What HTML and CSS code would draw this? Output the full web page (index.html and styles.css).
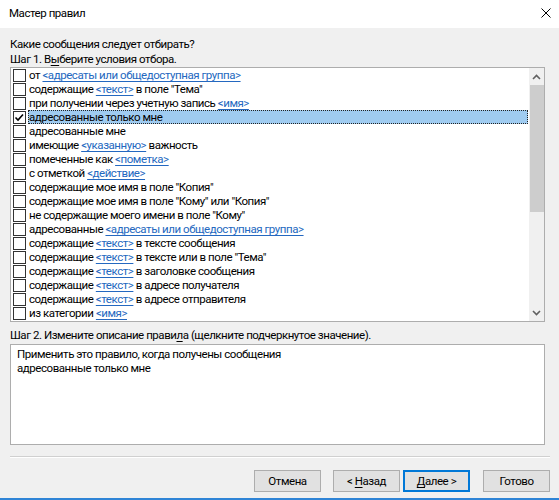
FILE: index.html
```html
<!DOCTYPE html>
<html lang="ru">
<head>
<meta charset="utf-8">
<title>Мастер правил</title>
<link rel="stylesheet" href="styles.css">
</head>
<body>
<div class="window">
  <div class="titlebar">
    <span class="title">Мастер правил</span>
    <svg class="close" width="10" height="10" viewBox="0 0 10 10"><path d="M0.5 0.5 L9.5 9.5 M9.5 0.5 L0.5 9.5" stroke="#000" stroke-width="1" fill="none"/></svg>
  </div>
  <div class="content">
    <div class="label">Какие сообщения следует отбирать?</div>
    <div class="label">Шаг 1. В<u>ы</u>берите условия отбора.</div>
    <div class="listbox">
      <div class="rows">
        <div class="row"><span class="cb"></span><span class="txt">от <a class="lnk">&lt;адресаты или общедоступная группа&gt;</a></span></div>
        <div class="row"><span class="cb"></span><span class="txt">содержащие <a class="lnk">&lt;текст&gt;</a> в поле "Тема"</span></div>
        <div class="row"><span class="cb"></span><span class="txt">при получении через учетную запись <a class="lnk">&lt;имя&gt;</a></span></div>
        <div class="row selected"><span class="cb"><svg width="11" height="11" viewBox="0 0 11 11"><path d="M1.5 5.5 L4 8 L9 2.5" stroke="#000" stroke-width="1.6" fill="none"/></svg></span><span class="txt">адресованные только мне</span></div>
        <div class="row"><span class="cb"></span><span class="txt">адресованные мне</span></div>
        <div class="row"><span class="cb"></span><span class="txt">имеющие <a class="lnk">&lt;указанную&gt;</a> важность</span></div>
        <div class="row"><span class="cb"></span><span class="txt">помеченные как <a class="lnk">&lt;пометка&gt;</a></span></div>
        <div class="row"><span class="cb"></span><span class="txt">с отметкой <a class="lnk">&lt;действие&gt;</a></span></div>
        <div class="row"><span class="cb"></span><span class="txt">содержащие мое имя в поле "Копия"</span></div>
        <div class="row"><span class="cb"></span><span class="txt">содержащие мое имя в поле "Кому" или "Копия"</span></div>
        <div class="row"><span class="cb"></span><span class="txt">не содержащие моего имени в поле "Кому"</span></div>
        <div class="row"><span class="cb"></span><span class="txt">адресованные <a class="lnk">&lt;адресаты или общедоступная группа&gt;</a></span></div>
        <div class="row"><span class="cb"></span><span class="txt">содержащие <a class="lnk">&lt;текст&gt;</a> в тексте сообщения</span></div>
        <div class="row"><span class="cb"></span><span class="txt">содержащие <a class="lnk">&lt;текст&gt;</a> в тексте или в поле "Тема"</span></div>
        <div class="row"><span class="cb"></span><span class="txt">содержащие <a class="lnk">&lt;текст&gt;</a> в заголовке сообщения</span></div>
        <div class="row"><span class="cb"></span><span class="txt">содержащие <a class="lnk">&lt;текст&gt;</a> в адресе получателя</span></div>
        <div class="row"><span class="cb"></span><span class="txt">содержащие <a class="lnk">&lt;текст&gt;</a> в адресе отправителя</span></div>
        <div class="row"><span class="cb"></span><span class="txt">из категории <a class="lnk">&lt;имя&gt;</a></span></div>
      </div>
      <div class="scrollbar">
        <div class="arrow"><svg width="9" height="6" viewBox="0 0 9 6"><path d="M1 5 L4.5 1.5 L8 5" stroke="#606060" stroke-width="1.6" fill="none"/></svg></div>
        <div class="track"><div class="thumb"></div></div>
        <div class="arrow"><svg width="9" height="6" viewBox="0 0 9 6"><path d="M1 1 L4.5 4.5 L8 1" stroke="#606060" stroke-width="1.6" fill="none"/></svg></div>
      </div>
    </div>
    <div class="label step2">Шаг 2. Измените описание прави<u>л</u>а (щелкните подчеркнутое значение).</div>
    <div class="desc">
      <div>Применить это правило, когда получены сообщения</div>
      <div>адресованные только мне</div>
    </div>
    <div class="separator"></div>
    <div class="buttons">
      <button class="btn">Отмена</button>
      <button class="btn back">&lt; <u>Н</u>азад</button>
      <button class="btn focused"><u>Д</u>алее &gt;</button>
      <button class="btn finish">Готово</button>
    </div>
  </div>
</div>
</body>
</html>
```
FILE: styles.css
```css
* { box-sizing: border-box; }
html, body { margin: 0; padding: 0; }
body {
  width: 559px;
  height: 500px;
  overflow: hidden;
  font-family: Roboto, "Noto Sans", "DejaVu Sans", sans-serif;
  font-size: 11.5px;
  letter-spacing: -0.45px;
  color: #000;
  background: #f0f0f0;
}
.window {
  width: 559px;
  height: 500px;
  display: flex;
  flex-direction: column;
  border-bottom: 2px solid #2f84d6;
}
.titlebar {
  height: 28px;
  background: #fff;
  display: flex;
  align-items: center;
  justify-content: space-between;
  padding: 0 8px 2px 9px;
}
.title { font-size: 11.5px; }
.content {
  flex: 1;
  background: #f0f0f0;
  padding: 9px 14px 0 10px;
  display: flex;
  flex-direction: column;
}
.label {
  height: 15px;
  line-height: 15px;
  white-space: nowrap;
}
u { text-decoration: underline; text-underline-offset: 2px; }
.listbox {
  height: 255px;
  border: 1px solid #adadad;
  background: #fff;
  display: flex;
  overflow: hidden;
}
.rows {
  flex: 1;
  padding-top: 0;
  padding-right: 1px;
  min-width: 0;
}
.row {
  height: 14px;
  display: flex;
  align-items: center;
  padding-left: 2px;
  white-space: nowrap;
}
.cb {
  width: 13px;
  height: 13px;
  border: 1px solid #333;
  background: #fff;
  flex: none;
  display: flex;
  align-items: center;
  justify-content: center;
}
.txt {
  margin-left: 2px;
  padding: 0 1px;
  height: 14px;
  line-height: 14px;
  flex: 1;
}
.selected .txt {
  background: #9fcbf0;
  outline: 1px dotted #222;
  outline-offset: -1px;
}
.lnk {
  color: #2468c0;
  text-decoration: underline;
  text-underline-offset: 2px;
}
.scrollbar {
  width: 15px;
  flex: none;
  background: #f0f0f0;
  display: flex;
  flex-direction: column;
}
.arrow {
  height: 17px;
  display: flex;
  align-items: center;
  justify-content: center;
}
.track {
  flex: 1;
  padding: 0 0 0 1px;
}
.thumb {
  height: 127px;
  background: #cdcdcd;
}
.step2 { margin-top: 6px; }
.desc {
  margin-top: 1px;
  height: 101px;
  border: 1px solid #adadad;
  background: #fff;
  padding: 2px 6px;
  line-height: 14px;
}
.separator {
  margin-top: 11px;
  height: 2px;
  border-top: 1px solid #d0d0d0;
  border-bottom: 1px solid #fff;
  margin-right: -5px;
}
.buttons {
  margin-top: 12px;
  display: flex;
  justify-content: flex-end;
  margin-right: -5px;
}
.btn {
  width: 67px;
  height: 22px;
  font-family: inherit;
  font-size: 11.5px;
  letter-spacing: inherit;
  color: #000;
  background: #e1e1e1;
  border: 1px solid #adadad;
  padding: 0;
}
.back { margin-left: 12px; }
.focused {
  margin-left: 3px;
  border-color: #0078d7;
  box-shadow: inset 0 0 0 1px #0078d7;
}
.finish { margin-left: 13px; }
```
